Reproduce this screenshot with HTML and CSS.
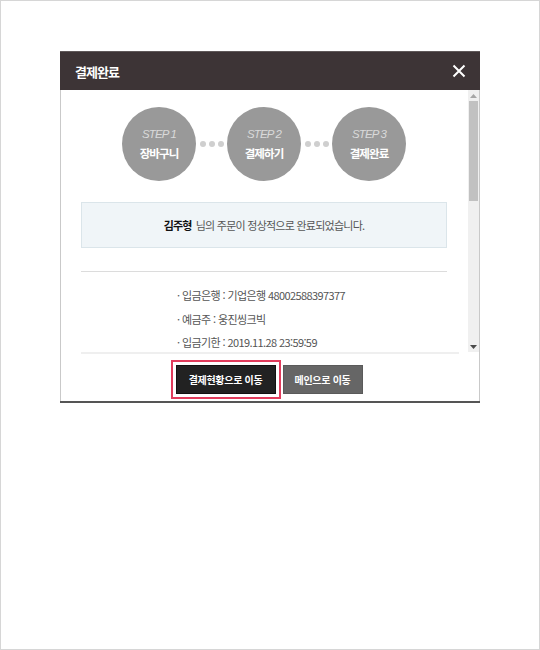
FILE: index.html
```html
<!DOCTYPE html>
<html lang="ko">
<head>
<meta charset="utf-8">
<title>결제완료</title>
<link rel="stylesheet" href="styles.css">
</head>
<body>
<div class="page">
  <div class="modal">
    <div class="modal-head">
      <h1 class="modal-title">결제완료</h1>
      <button class="close" type="button" aria-label="닫기">
        <svg width="14" height="14" viewBox="0 0 14 14"><path d="M1.5 1.5 L12.5 12.5 M12.5 1.5 L1.5 12.5" stroke="#fff" stroke-width="2" fill="none"/></svg>
      </button>
    </div>
    <div class="modal-body">
      <div class="scroll-content">
        <div class="steps">
          <div class="step"><span class="step-no">STEP 1</span><span class="step-name">장바구니</span></div>
          <div class="dots"><i></i><i></i><i></i></div>
          <div class="step"><span class="step-no">STEP 2</span><span class="step-name">결제하기</span></div>
          <div class="dots"><i></i><i></i><i></i></div>
          <div class="step"><span class="step-no">STEP 3</span><span class="step-name">결제완료</span></div>
        </div>
        <div class="notice"><strong>김주형</strong> 님의 주문이 정상적으로 완료되었습니다.</div>
        <hr class="divider">
        <ul class="info">
          <li>· 입금은행 : 기업은행 48002588397377</li>
          <li>· 예금주 : 웅진씽크빅</li>
          <li>· 입금기한 : 2019.11.28 23:59:59</li>
        </ul>
      </div>
      <div class="scrollbar" aria-hidden="true">
        <span class="sb-btn">
          <svg width="7" height="4" viewBox="0 0 7 4"><path d="M0 4 L3.5 0 L7 4 Z" fill="#a6a6a6"/></svg>
        </span>
        <span class="sb-track"><span class="sb-thumb"></span></span>
        <span class="sb-btn">
          <svg width="7" height="4" viewBox="0 0 7 4"><path d="M0 0 L7 0 L3.5 4 Z" fill="#4a4a4a"/></svg>
        </span>
      </div>
    </div>
    <div class="modal-foot">
      <button class="btn btn-dark focus" type="button">결제현황으로 이동</button>
      <button class="btn btn-gray" type="button">메인으로 이동</button>
    </div>
  </div>
</div>
</body>
</html>
```
FILE: styles.css
```css
* { box-sizing: border-box; }
html, body { margin: 0; padding: 0; background: #fff; }
body { font-family: "Noto Sans CJK KR", "Noto Sans", sans-serif; }

.page {
  width: 540px;
  height: 650px;
  border: 1px solid #d6d6d6;
  padding-top: 50px;
}

.modal {
  width: 420px;
  margin-left: 59px;
  background: #fff;
  border-bottom: 2px solid #555;
}

.modal-head {
  height: 39px;
  background: #3d3436;
  border-top: 1px solid #5f5859;
  display: flex;
  align-items: center;
  justify-content: space-between;
  padding: 0 14px 0 15px;
}
.modal-title {
  margin: 0;
  color: #fff;
  font-size: 13px;
  font-weight: 700;
  letter-spacing: -1px;
  line-height: 1;
}
.close {
  background: none;
  border: 0;
  padding: 0;
  width: 14px;
  height: 14px;
  display: flex;
}

.modal-body {
  height: 262px;
  display: flex;
  border-left: 1px solid #c9c9c9;
  border-right: 1px solid #c9c9c9;
}
.scroll-content {
  flex: 1;
  min-width: 0;
  overflow: hidden;
  padding: 17px 21px 0 20px;
}

.scrollbar {
  width: 11px;
  background: #f0f0f0;
  display: flex;
  flex-direction: column;
}
.sb-btn {
  height: 11px;
  display: flex;
  align-items: center;
  justify-content: center;
}
.sb-track {
  flex: 1;
  padding: 0 1px;
}
.sb-thumb {
  display: block;
  height: 100px;
  background: #c1c1c1;
}

.steps {
  display: flex;
  justify-content: center;
  align-items: center;
}
.step {
  width: 74px;
  height: 74px;
  border-radius: 50%;
  background: #999;
  display: flex;
  flex-direction: column;
  align-items: center;
  justify-content: center;
  padding-bottom: 1px;
}
.step-no {
  font-family: "Liberation Sans", Arial, sans-serif;
  font-style: italic;
  font-size: 11.5px;
  color: #dadada;
  letter-spacing: -0.9px;
  line-height: 18px;
}
.step-name {
  font-size: 11.5px;
  font-weight: 700;
  color: #fff;
  letter-spacing: -0.9px;
  line-height: 20px;
}
.dots {
  width: 31px;
  display: flex;
  justify-content: center;
  gap: 3px;
}
.dots i {
  width: 6px;
  height: 6px;
  border-radius: 50%;
  background: #cfcfcf;
}

.notice {
  margin-top: 21px;
  height: 46px;
  background: #f0f5f8;
  border: 1px solid #dbe5ea;
  display: flex;
  align-items: center;
  justify-content: center;
  font-size: 11px;
  color: #555;
  letter-spacing: -0.75px;
}
.notice strong { color: #111; font-weight: 700; margin-right: 4px; }

.divider {
  margin: 23px 0 0;
  border: 0;
  border-top: 1px solid #dcdcdc;
}

.info {
  list-style: none;
  margin: 12px 0 0;
  padding: 0 0 0 96px;
}
.info li {
  font-size: 11px;
  color: #555;
  line-height: 23.5px;
  letter-spacing: -0.6px;
}

.modal-foot {
  height: 49px;
  display: flex;
  justify-content: center;
  align-items: flex-start;
  gap: 7px;
  position: relative;
  border-left: 1px solid #c9c9c9;
  border-right: 1px solid #c9c9c9;
  padding: 13px 2px 0 0;
}
.modal-foot::before {
  content: "";
  position: absolute;
  left: 20px;
  right: 20px;
  top: 0;
  height: 2px;
  background: #efefef;
}
.btn {
  height: 29px;
  border-radius: 0;
  color: #fff;
  font-family: "Noto Sans CJK KR", sans-serif;
  font-size: 10px;
  font-weight: 700;
  letter-spacing: -0.3px;
  padding: 0;
  white-space: nowrap;
}
.btn-dark { width: 100px; background: #222; border: 1px solid #111; }
.btn-gray { width: 80px; background: #666; border: 1px solid #5a5a5a; }
.focus { outline: 2px solid #e23c5c; outline-offset: 3px; }
```
